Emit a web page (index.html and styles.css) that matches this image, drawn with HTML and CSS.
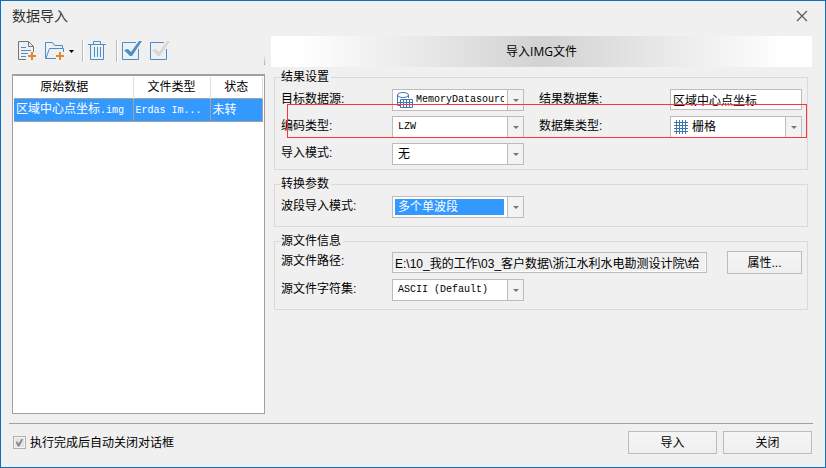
FILE: index.html
```
<!DOCTYPE html>
<html lang="zh-CN">
<head>
  <meta charset="UTF-8">
  <meta name="viewport" content="width=device-width, initial-scale=1.0">
  <title>数据导入</title>
  <link rel="stylesheet" href="styles.css">
</head>
<body>
  <header class="titlebar">
    <h1>数据导入</h1>
    <button type="button" class="close" aria-label="关闭窗口">
      <svg width="12" height="12" viewBox="0 0 12 12"><path d="M1 1l10 10M11 1L1 11" stroke="#555" stroke-width="1.1"/></svg>
    </button>
  </header>

  <main class="content">
    <section class="files">
      <div class="toolbar">
        <button type="button" class="tool" aria-label="添加文件">
          <svg width="20" height="22" viewBox="0 0 20 22" fill="none">
            <path d="M9 19.500H1.500V1.500H11.500L16.500 6.500V12" stroke="#757575"/>
            <path d="M11.500 1.500V6.500H16.500" stroke="#757575"/>
            <path d="M4 7.500H9M4 10.500H14M4 13.500H11M4 16.500H9" stroke="#4a8fcb"/>
            <path d="M15 12v8M11 16h8" stroke="#e08a2e" stroke-width="2"/>
          </svg>
        </button>
        <button type="button" class="tool folder" aria-label="添加文件夹">
          <svg width="20" height="22" viewBox="0 0 20 22" fill="none" stroke="#4a8fcb">
            <path d="M11 18.500H0.500V2.500H7.500L9.500 5.500H17.500V8"/>
            <path d="M1 18L4.500 8.500H18.500V12"/>
            <path d="M15 12v8M11 16h8" stroke="#e08a2e" stroke-width="2"/>
          </svg>
          <svg width="5" height="3" viewBox="0 0 5 3"><path d="M0 0h5L2.500 3z" fill="#000"/></svg>
        </button>
        <span class="divider"></span>
        <button type="button" class="tool" aria-label="删除">
          <svg width="20" height="22" viewBox="0 0 20 22" fill="none" stroke="#4a8fcb">
            <path d="M0 4.500H18M5.500 4V1.500H12.500V4M2.500 5V19.500H15.500V5"/>
            <path d="M6.500 7v10M9.500 7v10M12.500 7v10"/>
          </svg>
        </button>
        <span class="divider"></span>
        <button type="button" class="tool" aria-label="全选">
          <svg width="20" height="22" viewBox="0 0 20 22" fill="none">
            <path d="M14 2.500H0.500V19.500H16.500V9" stroke="#4a8fcb"/>
            <path d="M2 10L6 9L9 12L17 1H20L10 16H8Z" fill="#4a8fcb"/>
          </svg>
        </button>
        <button type="button" class="tool" aria-label="反选">
          <svg width="20" height="22" viewBox="0 0 20 22" fill="none">
            <path d="M14 2.500H0.500V19.500H16.500V9" stroke="#4a8fcb"/>
            <path d="M2 10L6 9L9 12L17 1H20L10 16H8Z" fill="#d8d8d8"/>
          </svg>
        </button>
      </div>

      <div class="file-list">
        <table>
          <thead>
            <tr><th class="col-name">原始数据</th><th class="col-type">文件类型</th><th>状态</th></tr>
          </thead>
          <tbody>
            <tr><td>区域中心点坐标<span class="mono">.img</span></td><td><span class="mono">Erdas Im...</span></td><td>未转</td></tr>
          </tbody>
        </table>
      </div>
    </section>

    <form class="settings">
      <h2>导入IMG文件</h2>

      <fieldset class="result">
        <legend>结果设置</legend>
        <div class="fields">
          <label for="datasource">目标数据源:</label>
          <div class="combo">
            <svg class="icon-db" width="18" height="18" viewBox="0 0 18 18" fill="none" stroke="#4279b5">
              <ellipse cx="7" cy="4" rx="5.500" ry="2.500"/>
              <path d="M1.500 4V14.500H4M12.500 4V7M1.500 11.500H4"/>
              <path d="M4.500 8.500H16.500V16.500H4.500ZM7.500 9v7M10.500 9v7M13.500 9v7M4 11.500H17"/>
            </svg>
            <select id="datasource" class="latin"><option>MemoryDatasource</option></select>
            <span class="arrow"></span>
          </div>
          <label for="dataset" class="second">结果数据集:</label>
          <input type="text" id="dataset" value="区域中心点坐标">

          <label for="encoding">编码类型:</label>
          <div class="combo">
            <select id="encoding" class="latin"><option>LZW</option></select>
            <span class="arrow"></span>
          </div>
          <label for="dataset-type" class="second">数据集类型:</label>
          <div class="combo">
            <svg class="icon-grid" width="14" height="14" viewBox="0 0 14 14" stroke="#3f74ad">
              <path d="M2.500 0v14M5.500 0v14M8.500 0v14M11.500 0v14M0 2.500h14M0 5.500h14M0 8.500h14M0 11.500h14"/>
            </svg>
            <select id="dataset-type"><option>栅格</option></select>
            <span class="arrow"></span>
          </div>

          <label for="import-mode">导入模式:</label>
          <div class="combo">
            <select id="import-mode"><option>无</option></select>
            <span class="arrow"></span>
          </div>
        </div>
        <div class="highlight"></div>
      </fieldset>

      <fieldset>
        <legend>转换参数</legend>
        <div class="fields">
          <label for="band-mode">波段导入模式:</label>
          <div class="combo focused">
            <select id="band-mode"><option>多个单波段</option></select>
            <span class="arrow"></span>
          </div>
        </div>
      </fieldset>

      <fieldset class="source">
        <legend>源文件信息</legend>
        <div class="fields">
          <label for="path">源文件路径:</label>
          <div class="path-row">
            <input type="text" id="path" readonly value="E:\10_我的工作\03_客户数据\浙江水利水电勘测设计院\给">
            <button type="button" class="btn">属性...</button>
          </div>
          <label for="charset">源文件字符集:</label>
          <div class="combo">
            <select id="charset" class="latin"><option>ASCII (Default)</option></select>
            <span class="arrow"></span>
          </div>
        </div>
      </fieldset>
    </form>
  </main>

  <footer class="actions">
    <label class="auto-close"><input type="checkbox" checked>执行完成后自动关闭对话框</label>
    <button type="button" class="btn wide">导入</button>
    <button type="button" class="btn wide">关闭</button>
  </footer>
</body>
</html>
```

FILE: styles.css
```
* {
  box-sizing: border-box;
}

body {
  margin: 0;
  min-height: 100vh;
  display: flex;
  flex-direction: column;
  border: 1px solid #0a70c0;
  background: #f0f0f0;
  color: #000;
  font: 12px/14px "Liberation Sans", "Noto Sans CJK SC", sans-serif;
}

button, input, select {
  font: inherit;
  color: inherit;
  margin: 0;
}

.titlebar {
  display: flex;
  justify-content: space-between;
  align-items: center;
  height: 30px;
  padding: 0 17px 0 11px;
}

.titlebar h1 {
  margin: 0;
  font-size: 14px;
  line-height: 20px;
  font-weight: normal;
  color: #333;
}

.close, .tool {
  display: flex;
  align-items: center;
  padding: 0;
  border: 0;
  background: none;
}

.content {
  flex: 1;
  display: flex;
  gap: 6px;
  padding: 0 13px 9px 11px;
}

/* left side: toolbar and file list */
.files {
  flex: 0 0 253px;
  display: flex;
  flex-direction: column;
}

.toolbar {
  display: flex;
  align-items: center;
  height: 43px;
  padding: 0 0 3px 5px;
  gap: 8px;
  background: linear-gradient(#f0f0f0, #a8a8a8) right 24px / 1px 10px no-repeat;
  background-position: right 24px;
}

.folder {
  gap: 4px;
}

.divider {
  width: 2px;
  height: 22px;
  margin-right: -4px;
  border-left: 1px solid #bbb;
  border-right: 1px solid #fff;
}

.file-list {
  flex: 1;
  border: 1px solid #a0a0a0;
  border-top-width: 2px;
  padding: 1px;
  background: #fff;
}

table {
  width: 100%;
  border-collapse: collapse;
  table-layout: fixed;
}

th {
  height: 21px;
  padding: 0;
  font-weight: normal;
  border-right: 1px solid #ddd;
}

.col-name {
  width: 119px;
  padding-right: 18px;
}

.col-type {
  width: 77px;
}

td {
  height: 23px;
  padding: 0 0 0 2px;
  border: 1px solid #a0a0a0;
  border-left: 0;
  background: #39f;
  color: #fff;
  white-space: nowrap;
  overflow: hidden;
}

.mono {
  font-family: "Liberation Mono", monospace;
  font-size: 10px;
}

/* right side: import settings */
.settings {
  flex: 1;
  min-width: 0;
  padding-top: 5px;
}

.settings h2 {
  margin: 0 0 3px;
  font: 12px/31px "Open Sans", "Noto Sans CJK SC", sans-serif;
  text-align: center;
  background: linear-gradient(90deg, #fff 5%, #d2d2d2 50%, #fff 95%);
}

fieldset {
  position: relative;
  min-width: 0;
  margin: 0 4px 7px 3px;
  padding: 5px 5px 8px 6px;
  border: 1px solid #dadada;
}

fieldset.result {
  padding-bottom: 4px;
}

fieldset.source {
  padding-top: 3px;
}

legend {
  padding: 0 2px 0 0;
}

.fields {
  display: grid;
  grid-template-columns: 111px 1fr 146px 1fr;
  row-gap: 5px;
}

.fields label {
  grid-column: 1;
  line-height: 20px;
}

.fields .second {
  grid-column: 3;
  padding-left: 15px;
}

.fields input {
  min-width: 0;
  height: 21px;
  padding: 0 2px;
  border: 1px solid #bcbcbc;
  background: #fff;
}

.path-row {
  grid-column: 2 / -1;
  display: flex;
  align-items: center;
  gap: 20px;
}

.path-row input {
  flex: 1;
  background: #f0f0f0;
  box-shadow: inset -1px -1px #fff;
}

.combo {
  display: flex;
  align-items: center;
  min-width: 0;
  height: 22px;
  border: 1px solid #bcbcbc;
  background: #fff;
}

.combo select {
  flex: 1;
  min-width: 0;
  height: 16px;
  margin: 0 3px 0 2px;
  padding: 0 0 0 3px;
  border: 0;
  appearance: none;
  background: none;
}

.combo .latin {
  font-family: "Liberation Mono", monospace;
  font-size: 10px;
}

.combo svg + select {
  padding-left: 0;
}

.combo.focused select {
  background: #39f;
  color: #fff;
}

.icon-db {
  flex: none;
  margin-left: 3px;
}

.icon-grid {
  flex: none;
  margin: 0 2px 0 3px;
}

.arrow {
  display: flex;
  align-items: center;
  justify-content: center;
  width: 16px;
  height: 20px;
  border-left: 1px solid #bcbcbc;
  background: #f3f3f3;
}

.arrow::before {
  content: "";
  border: 3px solid transparent;
  border-top-color: #777;
  border-bottom: 0;
}

/* red frame over the encoding / type row */
.highlight {
  position: absolute;
  top: 20px;
  left: 12px;
  right: 0;
  height: 34px;
  border: 1px solid #f33;
  pointer-events: none;
}

.btn {
  width: 75px;
  height: 23px;
  padding: 0;
  border: 1px solid #bcbcbc;
  background: linear-gradient(#f5f5f5, #efefef);
}

/* bottom bar */
.actions {
  display: flex;
  gap: 6px;
  height: 44px;
  margin: 0 12px 0 8px;
  padding: 7px 1px 0 4px;
  border-top: 1px solid #a0a0a0;
}

.auto-close {
  display: flex;
  align-items: center;
  gap: 4px;
  height: 23px;
  margin-right: auto;
}

.auto-close input {
  display: flex;
  align-items: center;
  justify-content: center;
  width: 13px;
  height: 13px;
  border: 1px solid #b0b0b0;
  background: #e3e3e3;
  box-shadow: inset 0 0 0 1px #f6f6f6;
  appearance: none;
}

.auto-close input:checked::before {
  content: "";
  width: 8px;
  height: 8px;
  background: #888;
  clip-path: polygon(0 45%, 20% 38%, 38% 62%, 80% 0, 100% 0, 48% 100%, 30% 100%);
}

.btn.wide {
  width: 89px;
}
```
